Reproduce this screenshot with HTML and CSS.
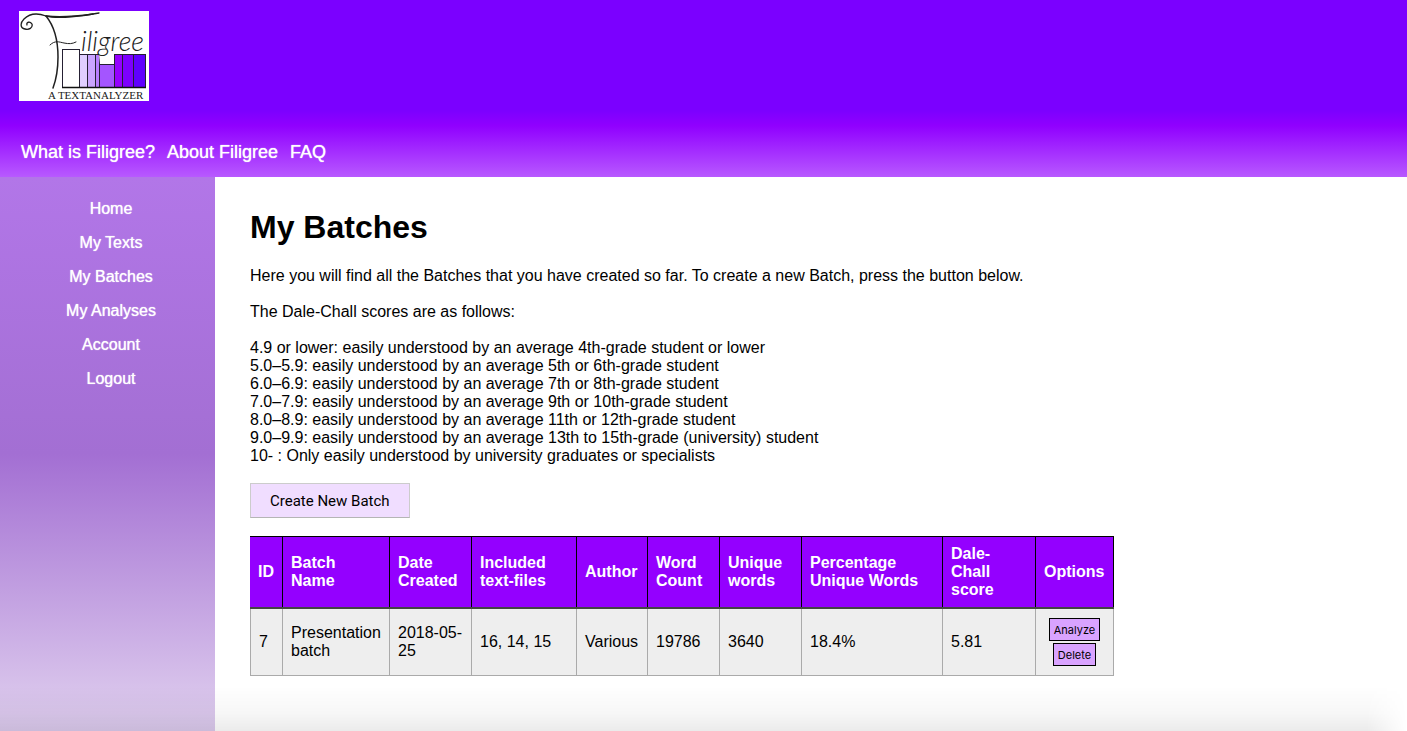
FILE: index.html
```html
<!DOCTYPE html>
<html lang="en">
<head>
<meta charset="utf-8">
<title>My Batches - Filigree</title>
<link rel="stylesheet" href="styles.css">
</head>
<body>
<header class="header">
  <a class="logo" href="#" aria-label="Filigree, a text analyzer">
    <svg class="logo-art" viewBox="0 0 130 90" aria-hidden="true">
      <rect width="130" height="90" fill="#fff"/>
      <g stroke="#252033" stroke-width="1">
        <rect x="43.500" y="38.500" width="17" height="38" fill="#fff"/>
        <rect x="60.500" y="43.500" width="8" height="33" fill="#e0ceff"/>
        <rect x="68.500" y="43.500" width="8" height="33" fill="#caa4ff"/>
        <rect x="76.500" y="43.500" width="4" height="33" fill="#b77dff"/>
        <rect x="80.500" y="53.500" width="15" height="23" fill="#a455ff"/>
        <rect x="95.500" y="43.500" width="8" height="33" fill="#9500ff"/>
        <rect x="103.500" y="43.500" width="11" height="33" fill="#7d00ff"/>
        <rect x="114.500" y="43.500" width="12" height="33" fill="#6000ff"/>
      </g>
      <path d="M80 43H95V53H81Z" fill="#fff"/>
      <path d="M43 76.500H127" stroke="#111" stroke-width="1.500"/>
      <g fill="none" stroke="#202020" stroke-linecap="round">
        <path d="M8 14C7 11 11 10 13 13C14 17 10 19 6 18C1 17 1 12 5 8C11 2 19 2 27 5C39 8 65 5 80 2" stroke-width="1.300"/>
        <path d="M27 5C44 7 60 5 74 3" stroke-width="1.600"/>
        <path d="M27 5C36 16 39 31 39 46C39 59 37 69 34 77" stroke-width="1.500"/>
        <path d="M31 34C36 29 40 31 45 32C50 33 53 33 57 31" stroke-width="1"/>
      </g>
      <text class="logo-name" x="62" y="40">iligree</text>
      <text class="logo-tag" x="29" y="88">A TEXTANALYZER</text>
    </svg>
  </a>
  <nav class="top-nav" aria-label="About">
    <a href="#">What is Filigree?</a>
    <a href="#">About Filigree</a>
    <a href="#">FAQ</a>
  </nav>
</header>
<div class="page">
  <nav class="sidebar" aria-label="Main">
    <a href="#">Home</a>
    <a href="#">My Texts</a>
    <a href="#">My Batches</a>
    <a href="#">My Analyses</a>
    <a href="#">Account</a>
    <a href="#">Logout</a>
  </nav>
  <main class="content">
    <h1>My Batches</h1>
    <p>Here you will find all the Batches that you have created so far. To create a new Batch, press the button below.</p>
    <p>The Dale-Chall scores are as follows:</p>
    <p>4.9 or lower: easily understood by an average 4th-grade student or lower<br>
    5.0–5.9: easily understood by an average 5th or 6th-grade student<br>
    6.0–6.9: easily understood by an average 7th or 8th-grade student<br>
    7.0–7.9: easily understood by an average 9th or 10th-grade student<br>
    8.0–8.9: easily understood by an average 11th or 12th-grade student<br>
    9.0–9.9: easily understood by an average 13th to 15th-grade (university) student<br>
    10- : Only easily understood by university graduates or specialists</p>
    <button class="create" type="button">Create New Batch</button>
    <table class="batches">
      <colgroup>
        <col class="c-id"><col class="c-name"><col class="c-date"><col class="c-files"><col class="c-author">
        <col class="c-count"><col class="c-unique"><col class="c-percent"><col class="c-score"><col class="c-options">
      </colgroup>
      <thead>
        <tr>
          <th>ID</th><th>Batch Name</th><th>Date Created</th><th>Included text-files</th><th>Author</th>
          <th>Word Count</th><th>Unique words</th><th>Percentage Unique Words</th><th>Dale-Chall score</th><th>Options</th>
        </tr>
      </thead>
      <tbody>
        <tr>
          <td>7</td><td>Presentation batch</td><td>2018-05-25</td><td>16, 14, 15</td><td>Various</td>
          <td>19786</td><td>3640</td><td>18.4%</td><td>5.81</td>
          <td>
            <div class="options">
              <button class="small" type="button">Analyze</button>
              <button class="small" type="button">Delete</button>
            </div>
          </td>
        </tr>
      </tbody>
    </table>
  </main>
</div>
<div class="bottom-shade"></div>
</body>
</html>
```
FILE: styles.css
```css
* {
  box-sizing: border-box;
}

body {
  margin: 0;
  min-height: 100vh;
  display: flex;
  flex-direction: column;
  background: #fff;
  color: #000;
  font: 16px/18px "Liberation Sans", Arial, sans-serif;
}

.header {
  display: flex;
  flex-direction: column;
  align-items: flex-start;
  gap: 41px;
  padding: 11px 19px 14px;
  background: linear-gradient(#7b00ff 0, #7b00ff 62%, #9000ff 71%, #b859ff 100%);
}

.logo,
.logo-art {
  display: block;
}

.logo-art {
  width: 130px;
  height: 90px;
}

.logo-name {
  font: italic 300 27px Lato, "Liberation Sans", sans-serif;
  fill: #202020;
}

.logo-tag {
  font: 11px "Liberation Serif", "Times New Roman", serif;
  fill: #202020;
}

.top-nav {
  display: flex;
  gap: 12px;
  padding-left: 2px;
  font-size: 18px;
  line-height: 21px;
}

.top-nav a,
.sidebar a {
  color: #fff;
  text-decoration: none;
  text-shadow: 0 0 1px #fff;
}

.page {
  flex: 1;
  display: flex;
}

.sidebar {
  flex: 0 0 215px;
  display: flex;
  flex-direction: column;
  align-items: center;
  gap: 16px;
  padding: 23px 0 0 7px;
  background: linear-gradient(#b276e8 0, #a36fd3 50%, #d8c3eb 93%, #dccbed 100%);
}

.content {
  flex: 1;
  min-width: 0;
  padding: 32px 35px;
}

h1 {
  margin: 0 0 22px;
  font-size: 32px;
  line-height: 36px;
}

p {
  margin: 0 0 18px;
}

button {
  color: #000;
  font-family: Inter, Roboto, sans-serif;
}

.create {
  display: block;
  margin: 0 0 18px;
  padding: 9px 19px 7px;
  border: 1px solid #ccc;
  border-bottom-color: #b5b5b5;
  background: #f0ddff;
  font-family: Roboto, sans-serif;
  font-size: 15px;
  line-height: 17px;
}

.batches {
  width: 100%;
  max-width: 864px;
  table-layout: fixed;
  border-collapse: collapse;
}

.c-id { width: 32px; }
.c-name { width: 107px; }
.c-date { width: 82px; }
.c-files { width: 105px; }
.c-author { width: 71px; }
.c-count { width: 72px; }
.c-unique { width: 82px; }
.c-percent { width: 141px; }
.c-score { width: 93px; }

th,
td {
  padding: 8px;
  text-align: left;
  vertical-align: middle;
}

th {
  border: 1px solid #000;
  border-bottom: 2px solid #444;
  background: #9400ff;
  color: #fff;
}

th:first-child {
  padding-left: 7px;
  border-left-color: #9400ff;
}

td {
  padding: 9px 8px;
  border: 1px solid #aaa;
  background: #eee;
}

.options {
  display: flex;
  flex-direction: column;
  align-items: center;
  gap: 2px;
}

.small {
  padding: 5px 4px 3px;
  border: 1px solid #000;
  background: #d9a3ff;
  font-size: 11px;
  line-height: 13px;
}

.bottom-shade {
  position: fixed;
  right: 0;
  bottom: 0;
  left: 0;
  height: 45px;
  background: linear-gradient(transparent, rgba(0, 0, 0, 0.03) 60%, rgba(0, 0, 0, 0.08));
  -webkit-mask-image: linear-gradient(to left, transparent, #000 40px);
  mask-image: linear-gradient(to left, transparent, #000 40px);
  pointer-events: none;
}
```
